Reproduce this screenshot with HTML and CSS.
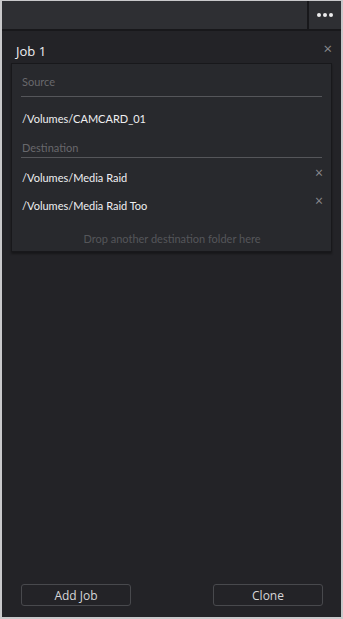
FILE: index.html
```html
<!DOCTYPE html>
<html lang="en">
<head>
  <meta charset="UTF-8">
  <meta name="viewport" content="width=device-width, initial-scale=1.0">
  <title>Clone Jobs</title>
  <link rel="stylesheet" href="styles.css">
</head>
<body>
  <div class="panel">
    <div class="toolbar">
      <div class="toolbar-space"></div>
      <button class="menu-btn" aria-label="Options">
        <span class="dot"></span><span class="dot"></span><span class="dot"></span>
      </button>
    </div>

    <div class="job">
      <div class="job-header">
        <h2>Job 1</h2>
        <span class="close">&times;</span>
      </div>

      <div class="job-card">
        <div class="field-label source">Source</div>
        <div class="path-row source-path">
          <span>/Volumes/CAMCARD_01</span>
        </div>

        <div class="field-label dest">Destination</div>
        <div class="path-row first-dest">
          <span>/Volumes/Media Raid</span>
          <span class="close small">&times;</span>
        </div>
        <div class="path-row">
          <span>/Volumes/Media Raid Too</span>
          <span class="close small">&times;</span>
        </div>

        <div class="drop-hint">Drop another destination folder here</div>
      </div>
    </div>

    <div class="footer">
      <button class="btn">Add Job</button>
      <button class="btn">Clone</button>
    </div>
  </div>
</body>
</html>
```

FILE: styles.css
```css
:root {
  --frame: #c9c9cb;
  --bar-bg: #2e2f33;
  --panel-bg: #232327;
  --card-bg: #28292d;
  --line-dark: #18181b;
  --text: #efeff1;
  --muted: #68686c;
  --rule: #55565a;
}

* {
  margin: 0;
  padding: 0;
  box-sizing: border-box;
}

body {
  font-family: 'Lato', 'Open Sans', sans-serif;
  background: var(--frame);
  color: var(--text);
  width: 343px;
  height: 619px;
  padding: 1px 2px 2px 2px;
}

.panel {
  height: 100%;
  display: flex;
  flex-direction: column;
  background: var(--panel-bg);
}

.toolbar {
  display: flex;
  height: 30px;
  background: var(--bar-bg);
  border-bottom: 2px solid var(--line-dark);
}

.toolbar-space {
  flex: 1;
}

.menu-btn {
  width: 34px;
  background: var(--bar-bg);
  border: none;
  border-left: 2px solid var(--line-dark);
  display: flex;
  align-items: center;
  justify-content: center;
  gap: 2px;
}

.dot {
  width: 4px;
  height: 4px;
  border-radius: 50%;
  background: #ececee;
}

.job {
  padding: 9px 9px 0 9px;
}

.job-header {
  display: flex;
  justify-content: space-between;
  align-items: center;
  padding-left: 5px;
  height: 21px;
}

h2 {
  font-family: 'Open Sans', sans-serif;
  font-size: 13px;
  font-weight: 400;
  color: var(--text);
}

.close {
  color: #8a8a8e;
  font-family: 'Open Sans', sans-serif;
  font-size: 15px;
  line-height: 1;
  margin-top: -4px;
}

.close.small {
  font-size: 14px;
  margin-top: -9px;
}

.job-card {
  margin-top: 2px;
  background: var(--card-bg);
  border: 1px solid var(--line-dark);
  box-shadow: 0 2px 2px rgba(0, 0, 0, 0.35);
  padding: 10px 8px 4px 9px;
}

.field-label {
  font-size: 11px;
  color: var(--muted);
  padding: 0 1px;
  border-bottom: 1px solid var(--rule);
  line-height: 16px;
  margin-right: 1px;
}

.field-label.source {
  padding-bottom: 6px;
}

.field-label.dest {
  padding-bottom: 1px;
}

.path-row {
  display: flex;
  justify-content: space-between;
  align-items: center;
  font-size: 11px;
  color: var(--text);
  height: 28px;
  padding-left: 1px;
}

.path-row.source-path {
  height: 43px;
}

.path-row.first-dest {
  margin-top: 5px;
}

.drop-hint {
  text-align: center;
  font-size: 11px;
  color: #55565a;
  margin-top: 12px;
  line-height: 16px;
}

.footer {
  margin-top: auto;
  display: flex;
  justify-content: space-between;
  padding: 0 18px 11px 19px;
}

.btn {
  width: 110px;
  height: 22px;
  background: transparent;
  border: 1px solid #48494d;
  border-radius: 3px;
  color: #d6d6d8;
  font-family: 'Open Sans', sans-serif;
  font-size: 12px;
}
```
